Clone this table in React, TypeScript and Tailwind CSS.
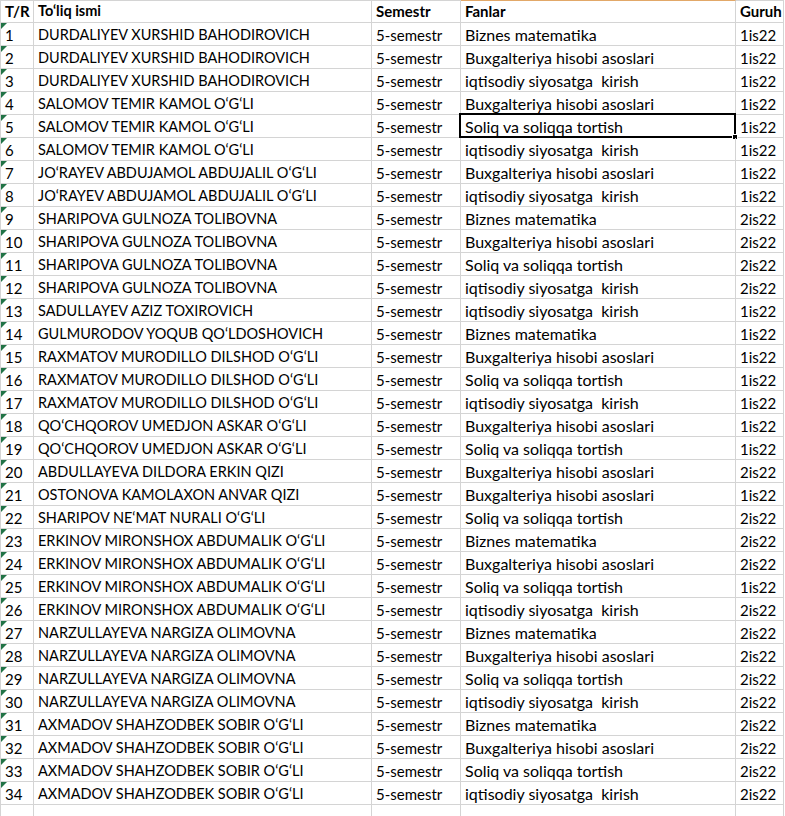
import React from 'react';

type Row = [string, string, string, string];

const D = 'DURDALIYEV XURSHID BAHODIROVICH';
const S = 'SALOMOV TEMIR KAMOL O‘G‘LI';
const J = 'JO‘RAYEV ABDUJAMOL ABDUJALIL O‘G‘LI';
const SH = 'SHARIPOVA GULNOZA TOLIBOVNA';
const R = 'RAXMATOV MURODILLO DILSHOD O‘G‘LI';
const Q = 'QO‘CHQOROV UMEDJON ASKAR O‘G‘LI';
const E = 'ERKINOV MIRONSHOX ABDUMALIK O‘G‘LI';
const N = 'NARZULLAYEVA NARGIZA OLIMOVNA';
const A = 'AXMADOV SHAHZODBEK SOBIR O‘G‘LI';

const BM = 'Biznes matematika';
const BX = 'Buxgalteriya hisobi asoslari';
const IQ = 'iqtisodiy siyosatga  kirish';
const SO = 'Soliq va soliqqa tortish';

const rows: Row[] = [
  [D, BM, '1is22'],
  [D, BX, '1is22'],
  [D, IQ, '1is22'],
  [S, BX, '1is22'],
  [S, SO, '1is22'],
  [S, IQ, '1is22'],
  [J, BX, '1is22'],
  [J, IQ, '1is22'],
  [SH, BM, '2is22'],
  [SH, BX, '2is22'],
  [SH, SO, '2is22'],
  [SH, IQ, '2is22'],
  ['SADULLAYEV AZIZ TOXIROVICH', IQ, '1is22'],
  ['GULMURODOV YOQUB QO‘LDOSHOVICH', BM, '1is22'],
  [R, BX, '1is22'],
  [R, SO, '1is22'],
  [R, IQ, '1is22'],
  [Q, BX, '1is22'],
  [Q, SO, '1is22'],
  ['ABDULLAYEVA DILDORA ERKIN QIZI', BX, '2is22'],
  ['OSTONOVA KAMOLAXON ANVAR QIZI', BX, '1is22'],
  ['SHARIPOV NE‘MAT NURALI O‘G‘LI', SO, '2is22'],
  [E, BM, '2is22'],
  [E, BX, '2is22'],
  [E, SO, '1is22'],
  [E, IQ, '2is22'],
  [N, BM, '2is22'],
  [N, BX, '2is22'],
  [N, SO, '2is22'],
  [N, IQ, '2is22'],
  [A, BM, '2is22'],
  [A, BX, '2is22'],
  [A, SO, '2is22'],
  [A, IQ, '2is22'],
].map((r, i) => [String(i + 1), r[0], r[1], r[2]] as Row);

const cell = 'h-[23px] border-r border-b border-[#d4d4d4] pl-[4px] flex items-end whitespace-pre overflow-hidden';

function GreenMark() {
  return (
    <svg className="absolute left-0 top-0" width="6" height="6" viewBox="0 0 6 6">
      <polygon points="0,0 6,0 0,6" fill="#217346" />
    </svg>
  );
}

export default function App() {
  return (
    <div
      className="w-[785px] h-[816px] overflow-hidden bg-white text-[15px] leading-[20px] text-black"
      style={{ fontFamily: 'Lato, "Liberation Sans", sans-serif' }}
    >
      <div className="border-l border-[#d4d4d4] w-[784px]">
        {/* header */}
        <div className="flex font-bold">
          <div className={`${cell} w-[33px] border-t pb-[1px]`}>T/R</div>
          <div className={`${cell} w-[338px] border-t pb-[1px] text-[14.5px]`}>To‘liq ismi</div>
          <div className={`${cell} w-[89px] border-t pb-[1px]`}>Semestr</div>
          <div className={`${cell} w-[275px] border-t pb-[1px] border-t-[#e2a868]`}>Fanlar</div>
          <div className={`${cell} w-[48px] border-t pb-[1px]`}>Guruh</div>
        </div>
        {rows.map((r, i) => (
          <div key={i} className="flex">
            <div className={`${cell} relative w-[33px]`}>
              <GreenMark />
              {r[0]}
            </div>
            <div className={`${cell} w-[338px] text-[14.5px]`}>{r[1]}</div>
            <div className={`${cell} w-[89px]`}>5-semestr</div>
            <div className={`${cell} relative w-[275px] overflow-visible text-[16px]`}>
              {i === 4 && (
                <div className="absolute -left-[2px] -top-[2px] w-[277px] h-[25px] border-2 border-black">
                  <div className="absolute -right-[4px] -bottom-[4px] w-[6px] h-[6px] bg-black border border-white" />
                </div>
              )}
              {r[2]}
            </div>
            <div className={`${cell} w-[48px]`}>{r[3]}</div>
          </div>
        ))}
        <div className="flex">
          <div className="h-[11px] w-[33px] border-r border-[#d4d4d4]" />
          <div className="h-[11px] w-[338px] border-r border-[#d4d4d4]" />
          <div className="h-[11px] w-[89px] border-r border-[#d4d4d4]" />
          <div className="h-[11px] w-[275px] border-r border-[#d4d4d4]" />
          <div className="h-[11px] w-[48px] border-r border-[#d4d4d4]" />
        </div>
      </div>
    </div>
  );
}
